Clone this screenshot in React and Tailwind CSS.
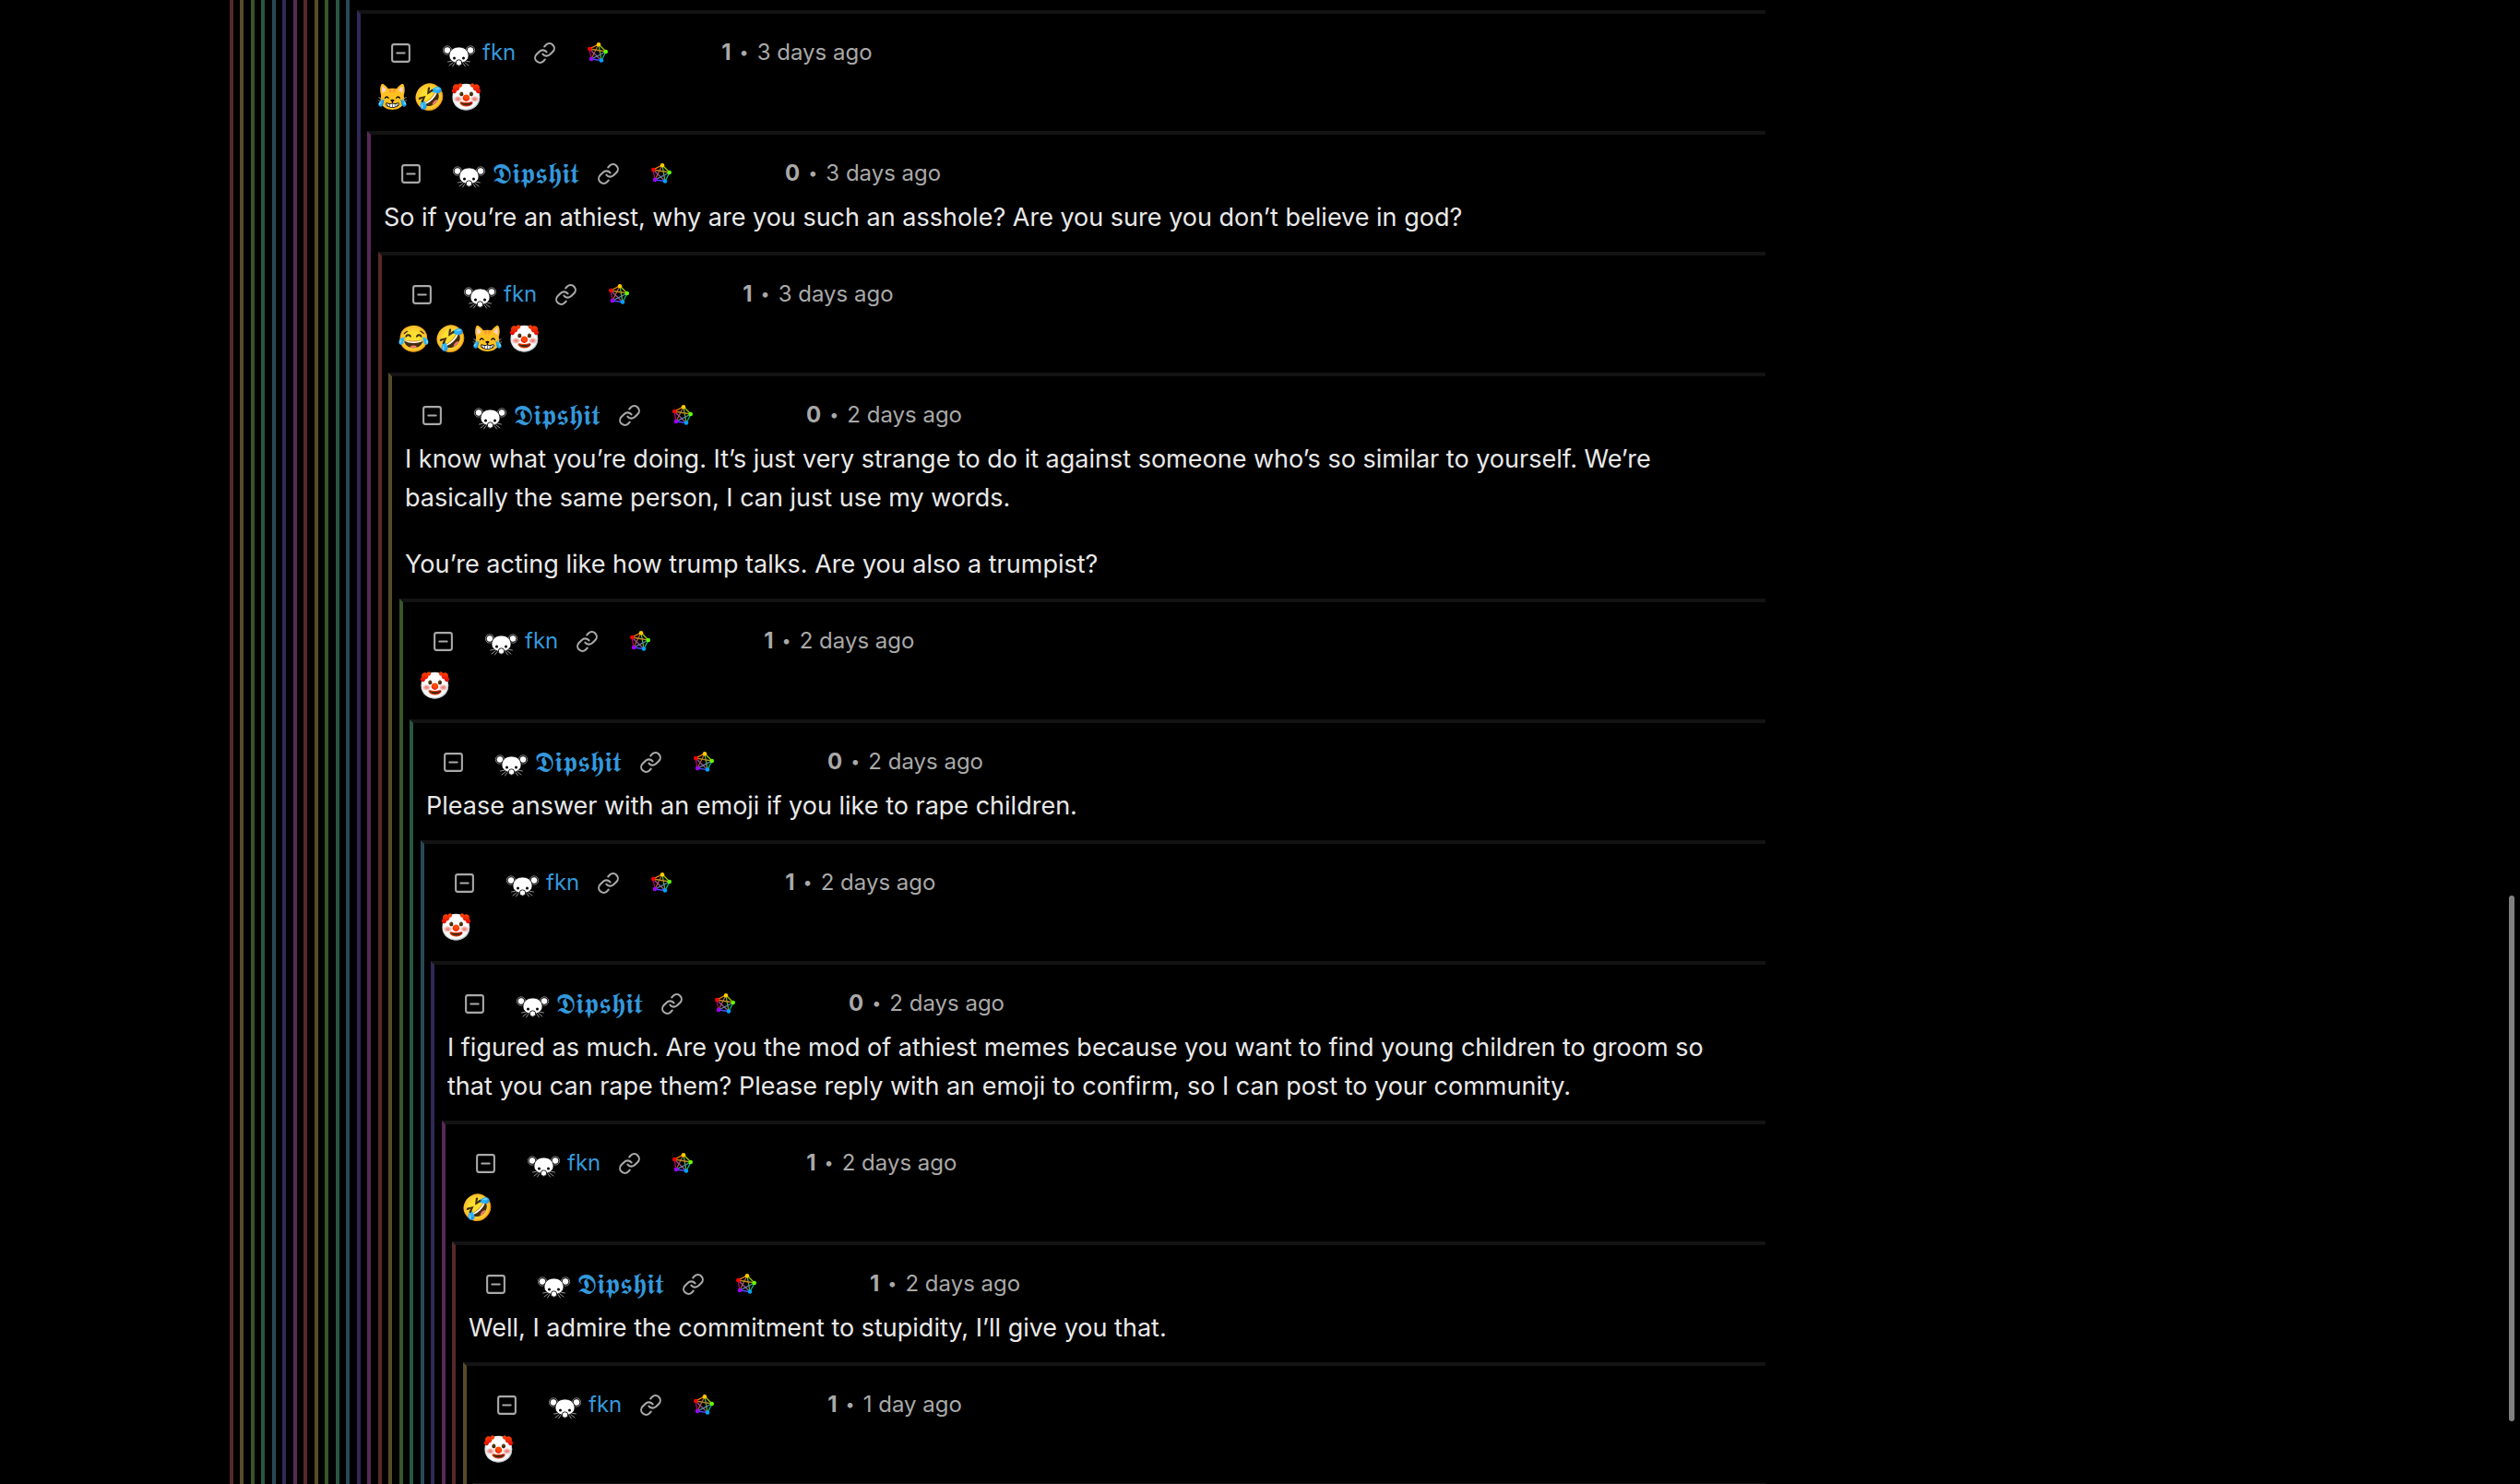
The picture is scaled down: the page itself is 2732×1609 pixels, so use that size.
import React from 'react';
import { Link, SquareMinus } from 'lucide-react';

// Depth colours repeat every seven levels
const DEPTH_COLORS = [
  'border-l-[#562929]',
  'border-l-[#564c29]',
  'border-l-[#375629]',
  'border-l-[#295643]',
  'border-l-[#294856]',
  'border-l-[#312956]',
  'border-l-[#562956]',
];

const FIRST_DEPTH = 12;

const FKN = 'fkn';
const DIPSHIT = '𝕯𝖎𝖕𝖘𝖍𝖎𝖙';

const comments = [
  { author: FKN, score: 1, time: '3 days ago', emojis: ['😹', '🤣', '🤡'] },
  {
    author: DIPSHIT,
    score: 0,
    time: '3 days ago',
    text: ['So if you’re an athiest, why are you such an asshole? Are you sure you don’t believe in god?'],
  },
  { author: FKN, score: 1, time: '3 days ago', emojis: ['😂', '🤣', '😹', '🤡'] },
  {
    author: DIPSHIT,
    score: 0,
    time: '2 days ago',
    text: [
      'I know what you’re doing. It’s just very strange to do it against someone who’s so similar to yourself. We’re basically the same person, I can just use my words.',
      'You’re acting like how trump talks. Are you also a trumpist?',
    ],
  },
  { author: FKN, score: 1, time: '2 days ago', emojis: ['🤡'] },
  {
    author: DIPSHIT,
    score: 0,
    time: '2 days ago',
    text: ['Please answer with an emoji if you like to rape children.'],
  },
  { author: FKN, score: 1, time: '2 days ago', emojis: ['🤡'] },
  {
    author: DIPSHIT,
    score: 0,
    time: '2 days ago',
    text: [
      'I figured as much. Are you the mod of athiest memes because you want to find young children to groom so that you can rape them? Please reply with an emoji to confirm, so I can post to your community.',
    ],
  },
  { author: FKN, score: 1, time: '2 days ago', emojis: ['🤣'] },
  {
    author: DIPSHIT,
    score: 1,
    time: '2 days ago',
    text: ['Well, I admire the commitment to stupidity, I’ll give you that.'],
  },
  { author: FKN, score: 1, time: '1 day ago', emojis: ['🤡'] },
];

function LemmyIcon() {
  return (
    <svg viewBox="0 0 70 48" className="h-6 w-[35px] shrink-0" aria-hidden="true">
      <g stroke="#b9b9b9" strokeWidth="1.6" fill="none" strokeLinecap="round">
        <path d="M22 34 L11 36 M23 37 L14 44 M26 39 L21 46" />
        <path d="M48 34 L59 36 M47 37 L56 44 M44 39 L49 46" />
      </g>
      <g fill="#fff" stroke="#000" strokeWidth="1.6">
        <circle cx="10" cy="11" r="9.2" stroke="#b9b9b9" fill="#000" />
        <circle cx="60" cy="11" r="9.2" stroke="#b9b9b9" fill="#000" />
        <circle cx="10" cy="11" r="7.6" />
        <circle cx="60" cy="11" r="7.6" />
        <path d="M35 4 C49 4 56 13 56 23 C56 33 46 39 35 39 C24 39 14 33 14 23 C14 13 21 4 35 4 Z" />
      </g>
      <circle cx="25" cy="28" r="3" fill="#000" />
      <circle cx="45" cy="28" r="3" fill="#000" />
      <circle cx="35" cy="38" r="6.4" fill="#fff" stroke="#222" strokeWidth="2" />
    </svg>
  );
}

function FediverseIcon() {
  return (
    <svg viewBox="0 0 44 44" className="size-[22px]" aria-hidden="true">
      <g strokeWidth="2.6" fill="none">
        <path d="M24 4 L40 20" stroke="#9fc800" />
        <path d="M24 4 L4 14" stroke="#ff8a00" />
        <path d="M4 14 L8 36" stroke="#b8006e" />
        <path d="M8 36 L30 39" stroke="#4a4cff" />
        <path d="M30 39 L40 20" stroke="#00b884" />
        <path d="M24 4 L8 36" stroke="#b06038" />
        <path d="M24 4 L30 39" stroke="#5eb030" />
        <path d="M4 14 L40 20" stroke="#c08a20" />
        <path d="M4 14 L30 39" stroke="#a04d90" />
        <path d="M40 20 L8 36" stroke="#5c8cb0" />
      </g>
      <circle cx="24" cy="4.500" r="4.500" fill="#ffca00" />
      <circle cx="4.500" cy="14" r="4.500" fill="#ff0000" />
      <circle cx="39.500" cy="20" r="4.500" fill="#64ff00" />
      <circle cx="8" cy="36" r="4.500" fill="#a200ff" />
      <circle cx="30" cy="39" r="4.500" fill="#00a3ff" />
    </svg>
  );
}

function CommentHeader({ author, score, time }) {
  return (
    <div className="flex h-[42px] items-center pl-[17px] text-2xl text-[#a9a9a9]">
      <button type="button" aria-label="Collapse" className="-mr-0.5">
        <SquareMinus size={25} strokeWidth={2} />
      </button>
      <a href="#user" className="ml-[35px] flex items-center gap-2 text-[#3498db]">
        <span className="pt-2">
          <LemmyIcon />
        </span>
        {author === DIPSHIT ? (
          <span className="font-['DejaVu_Sans',sans-serif] text-[31px] leading-[42px]">{author}</span>
        ) : (
          <span>{author}</span>
        )}
      </a>
      <a href="#link" aria-label="Link" className="ml-[19px]">
        <Link size={25} strokeWidth={2} />
      </a>
      <a href="#fediverse" aria-label="Fediverse" className="ml-[34px]">
        <FediverseIcon />
      </a>
      <span className="ml-[123px] font-bold">{score}</span>
      <span className="mx-[9px] text-lg">•</span>
      <span>{time}</span>
    </div>
  );
}

function Comment({ comment }) {
  return (
    <article className="pt-[21px] pb-4 pl-3.5">
      <CommentHeader author={comment.author} score={comment.score} time={comment.time} />
      <div className="mt-1.5 flex flex-col gap-[30px] pr-6 text-[27px] leading-[42px]">
        {comment.emojis && (
          <p className="flex h-[42px] text-[28px]">
            {comment.emojis.map((emoji, i) => (
              <span key={i} className="w-10 text-center">
                {emoji}
              </span>
            ))}
          </p>
        )}
        {comment.text && comment.text.map((line) => <p key={line}>{line}</p>)}
      </div>
    </article>
  );
}

// Each level wraps the next one, so the coloured bars stack up on the left
function Thread({ depth }) {
  const comment = comments[depth - FIRST_DEPTH];
  const isOuter = depth < FIRST_DEPTH;
  const isLast = depth === FIRST_DEPTH + comments.length;
  const topBorder = isOuter ? '' : 'border-t-4 border-t-[#131313]';
  const indent = depth % 2 === 0 ? 'pl-[7px]' : 'pl-2';

  return (
    <div className={`border-l-4 ${DEPTH_COLORS[depth % 7]} ${topBorder}`}>
      {comment && <Comment comment={comment} />}
      {isLast ? (
        <div className="h-32" />
      ) : (
        <div className={`${indent} ${depth === FIRST_DEPTH - 1 ? 'pt-[11px]' : ''}`}>
          <Thread depth={depth + 1} />
        </div>
      )}
    </div>
  );
}

export default function App() {
  return (
    <div className="relative h-screen overflow-hidden bg-black font-['Inter',sans-serif] text-[#e9e9e9]">
      <main className="ml-[249px] max-w-[1665px]">
        <Thread depth={0} />
      </main>

      {/* Scrollbar thumb */}
      <div className="absolute right-1.5 bottom-[68px] h-[570px] w-1.5 rounded-full bg-[#808080]" />
    </div>
  );
}
